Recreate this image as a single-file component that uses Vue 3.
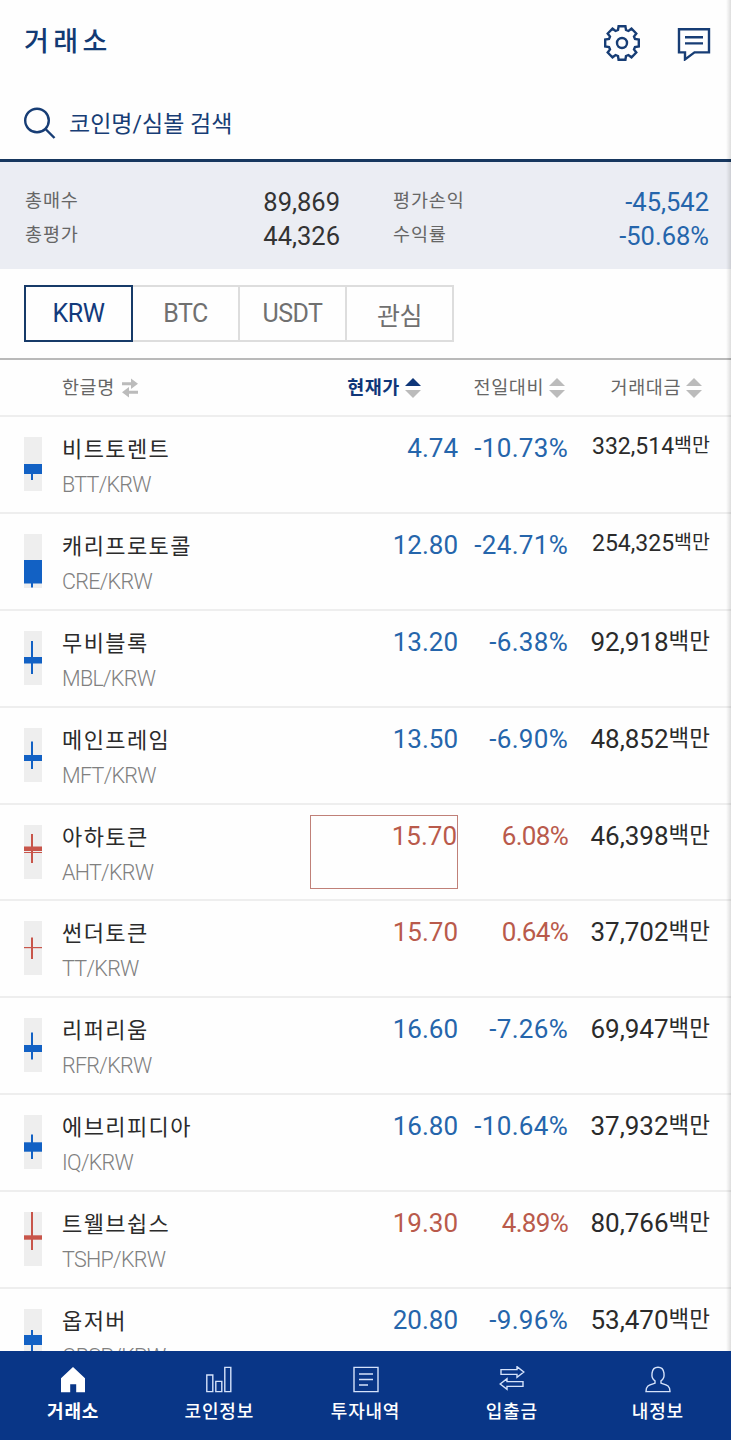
<template>
  <div class="exchange-page">
    <header class="page-header">
      <h1 class="page-title">거래소</h1>
      <div class="header-actions">
        <svg class="header-icon" width="38" height="38" viewBox="-19 -19 38 38">
          <path d="M-3.4-16.8L3.4-16.8 4-13 6.4-12 9.5-14.3 14.3-9.5 12-6.4 13-4 16.8-3.4 16.8 3.4 13 4 12 6.4 14.3 9.5 9.5 14.3 6.4 12 4 13 3.4 16.8-3.4 16.8-4 13-6.4 12-9.5 14.3-14.3 9.5-12 6.4-13 4-16.8 3.4-16.8-3.4-13-4-12-6.4-14.3-9.5-9.5-14.3-6.4-12-4-13Z" />
          <circle cx="0" cy="0" r="5" />
        </svg>
        <svg class="header-icon" width="34" height="36" viewBox="0 0 34 36">
          <path d="M2 4.2H32V27.4H17.5L8 34.4V27.4H2Z" />
          <path d="M8 12.2H26M8 18.4H26" />
        </svg>
      </div>
    </header>

    <div class="search-bar">
      <svg class="search-icon" width="34" height="34" viewBox="0 0 34 34">
        <circle cx="14" cy="14.5" r="11.8" />
        <path d="M22.5 23L31.5 32" />
      </svg>
      <span class="search-text">코인명/심볼 검색</span>
    </div>

    <section class="summary">
      <div v-for="item in summary" :key="item.label" class="summary-item">
        <span class="summary-label">{{ item.label }}</span>
        <span class="summary-value" :class="item.type">{{ item.value }}</span>
      </div>
    </section>

    <div class="market-bar">
      <button
        v-for="market in markets"
        :key="market"
        class="market-tab"
        :class="{ active: market === activeMarket }"
        @click="activeMarket = market"
      >
        {{ market }}
      </button>
    </div>

    <div class="list-header">
      <div class="head-name">
        <span class="head-label">한글명</span>
        <svg width="18" height="20" viewBox="0 0 18 20" class="swap-icon">
          <path d="M1 4.2H10V0.6L17 5.8L10 11V7.2H1ZM17 12.8H8V9L1 14.2L8 19.6V15.8H17Z" />
        </svg>
      </div>
      <div
        v-for="col in columns"
        :key="col.key"
        class="head-cell"
        :class="[col.key, { active: col.key === sortKey }]"
      >
        <span class="head-label">{{ col.label }}</span>
        <svg width="16" height="20" viewBox="0 0 16 20" class="sort-icon">
          <path class="sort-up" d="M8 0L16 8H0Z" />
          <path class="sort-down" d="M0 12H16L8 20Z" />
        </svg>
      </div>
    </div>

    <main class="coin-list">
      <div v-for="coin in coins" :key="coin.symbol" class="coin-row" :class="coin.type">
        <svg class="candle" width="18" height="54" viewBox="0 0 18 54">
          <rect class="candle-bg" width="18" height="54" />
          <rect x="7" width="2" :y="coin.wick[0]" :height="coin.wick[1] - coin.wick[0]" />
          <rect x="0" width="18" :y="coin.body[0]" :height="coin.body[1] - coin.body[0]" />
          <rect v-if="coin.open" x="0" width="18" :y="coin.open" height="1" />
        </svg>
        <div class="coin-info">
          <span class="coin-name">{{ coin.name }}</span>
          <span class="coin-symbol">{{ coin.symbol }}/KRW</span>
        </div>
        <div class="coin-price" :class="{ traded: coin.traded }">{{ coin.price }}</div>
        <div class="coin-rate">{{ coin.rate }}</div>
        <div class="coin-volume" :class="{ small: coin.volume.length > 6 }">
          {{ coin.volume }}<span class="unit">백만</span>
        </div>
      </div>
    </main>

    <nav class="tab-bar">
      <div class="tab-item active">
        <svg width="26" height="27" viewBox="0 0 26 27">
          <path class="filled" d="M13 1L25 12.2V26.3H16.2V18.2H10.2V26.3H1V12.2Z" />
        </svg>
        <span>거래소</span>
      </div>
      <div class="tab-item">
        <svg width="26" height="27" viewBox="0 0 26 27">
          <path d="M0.8 9H6.8V25.6H0.8ZM9.8 15.4H15.8V25.6H9.8ZM18.8 1.4H24.8V25.6H18.8Z" />
        </svg>
        <span>코인정보</span>
      </div>
      <div class="tab-item">
        <svg width="26" height="27" viewBox="0 0 26 27">
          <path d="M1 1.4H25V25.6H1ZM6 8H20M6 13.5H20M6 19H15" />
        </svg>
        <span>투자내역</span>
      </div>
      <div class="tab-item">
        <svg width="26" height="27" viewBox="0 0 26 27">
          <path d="M2 3.6H18V0.6L24.8 6L18 11.4V8.4H2ZM24 15.6H8V12.6L1.2 18L8 23.4V20.4H24Z" />
        </svg>
        <span>입출금</span>
      </div>
      <div class="tab-item">
        <svg width="26" height="27" viewBox="0 0 26 27">
          <path d="M10 14.8C5.5 12.4 5.6 1.3 13 1.3S20.5 12.4 16 14.8V17.2C22 19 25 19.4 25 25.6H1C1 19.4 4 19 10 17.2Z" />
        </svg>
        <span>내정보</span>
      </div>
    </nav>

    <div class="edge-shadow"></div>
  </div>
</template>

<script setup>
import { ref } from 'vue';

const activeMarket = ref('KRW');
const sortKey = ref('price');

const markets = ['KRW', 'BTC', 'USDT', '관심'];

const summary = [
  { label: '총매수', value: '89,869' },
  { label: '평가손익', value: '-45,542', type: 'fall' },
  { label: '총평가', value: '44,326' },
  { label: '수익률', value: '-50.68%', type: 'fall' }
];

const columns = [
  { key: 'price', label: '현재가' },
  { key: 'rate', label: '전일대비' },
  { key: 'volume', label: '거래대금' }
];

// wick, body: 캔들 영역(높이 54) 기준 y 좌표
const coins = [
  { name: '비트토렌트', symbol: 'BTT', price: '4.74', rate: '-10.73%', volume: '332,514', type: 'fall', wick: [27, 43], body: [27, 37] },
  { name: '캐리프로토콜', symbol: 'CRE', price: '12.80', rate: '-24.71%', volume: '254,325', type: 'fall', wick: [26, 53.5], body: [26, 49.5] },
  { name: '무비블록', symbol: 'MBL', price: '13.20', rate: '-6.38%', volume: '92,918', type: 'fall', wick: [10, 43], body: [26, 32.5] },
  { name: '메인프레임', symbol: 'MFT', price: '13.50', rate: '-6.90%', volume: '48,852', type: 'fall', wick: [13.5, 41], body: [27, 33] },
  { name: '아하토큰', symbol: 'AHT', price: '15.70', rate: '6.08%', volume: '46,398', type: 'rise', wick: [9, 38], body: [21.5, 26], open: 27, traded: true },
  { name: '썬더토큰', symbol: 'TT', price: '15.70', rate: '0.64%', volume: '37,702', type: 'rise', wick: [16.5, 38], body: [26, 27.2] },
  { name: '리퍼리움', symbol: 'RFR', price: '16.60', rate: '-7.26%', volume: '69,947', type: 'fall', wick: [14.5, 41.5], body: [27, 34] },
  { name: '에브리피디아', symbol: 'IQ', price: '16.80', rate: '-10.64%', volume: '37,932', type: 'fall', wick: [19.5, 44], body: [27.3, 36.7] },
  { name: '트웰브쉽스', symbol: 'TSHP', price: '19.30', rate: '4.89%', volume: '80,766', type: 'rise', wick: [0, 38], body: [23.3, 27.7] },
  { name: '옵저버', symbol: 'OBSR', price: '20.80', rate: '-9.96%', volume: '53,470', type: 'fall', wick: [21, 45], body: [26, 36] }
];
</script>

<style>
body {
  background-color: #fefefe;
}
</style>

<style scoped>
.exchange-page {
  position: relative;
  width: 731px;
  height: 1440px;
  overflow: hidden;
  display: flex;
  flex-direction: column;
  box-sizing: border-box;
  background-color: #fefefe;
  color: #2b2b2b;
  font-family: Roboto, 'Noto Sans CJK KR', sans-serif;
}

.page-header {
  flex: none;
  height: 86px;
  padding: 0 20px 0 24px;
  box-sizing: border-box;
  display: flex;
  align-items: center;
  justify-content: space-between;
}

.page-title {
  margin: 0;
  padding-bottom: 2px;
  font-size: 27px;
  font-weight: 500;
  letter-spacing: 4.4px;
  line-height: 30px;
  color: #123a74;
}

.header-actions {
  display: flex;
  align-items: center;
  gap: 36px;
}

.header-icon,
.search-icon {
  fill: none;
  stroke: #173d75;
  stroke-width: 2.4;
}

.search-bar {
  flex: none;
  height: 76px;
  padding: 0 23px;
  box-sizing: border-box;
  border-bottom: 3px solid #17375f;
  display: flex;
  align-items: center;
  gap: 12px;
}

.search-text {
  padding-bottom: 2px;
  font-size: 23px;
  color: #173d75;
}

.summary {
  flex: none;
  height: 107px;
  padding: 22px 22px 0 25px;
  box-sizing: border-box;
  display: grid;
  grid-template-columns: 315px 316px;
  column-gap: 53px;
  grid-auto-rows: 34px;
  background-color: #ebedf3;
}

.summary-item {
  display: flex;
  align-items: center;
  justify-content: space-between;
}

.summary-label {
  padding-bottom: 4px;
  font-size: 18.5px;
  letter-spacing: 0.9px;
  color: #666;
}

.summary-value {
  padding-top: 1px;
  font-size: 25.5px;
  color: #333;
}

.summary-value.fall {
  color: #2565ab;
}

.market-bar {
  flex: none;
  height: 91px;
  padding: 16px 24px 17px;
  box-sizing: border-box;
  border-bottom: 2px solid #b9b9b9;
  display: flex;
}

.market-tab {
  width: 109px;
  height: 57px;
  margin-right: -2px;
  padding: 0;
  border: 2px solid #ddd;
  background: none;
  font-family: inherit;
  font-size: 25px;
  letter-spacing: -0.5px;
  color: #707070;
  cursor: pointer;
}

.market-tab.active {
  position: relative;
  z-index: 1;
  border-color: #173a68;
  color: #123a7c;
}

.list-header {
  flex: none;
  height: 57px;
  padding: 0 29px 0 62px;
  box-sizing: border-box;
  border-bottom: 2px solid #eee;
  display: flex;
  align-items: center;
  font-size: 18.5px;
  color: #666;
}

.head-label {
  padding-bottom: 3px;
  letter-spacing: 0.6px;
}

.head-name {
  width: 200px;
  display: flex;
  align-items: center;
  gap: 6px;
}

.swap-icon {
  fill: #bbb;
}

.head-cell {
  display: flex;
  align-items: center;
  justify-content: flex-end;
  gap: 5px;
}

.head-cell.price {
  width: 159px;
}

.head-cell.rate {
  width: 144px;
}

.head-cell.volume {
  width: 137px;
}

.head-cell.active {
  font-weight: 700;
  color: #0f3678;
}

.sort-icon {
  fill: #bbb;
}

.head-cell.active .sort-up {
  fill: #0f3678;
}

.coin-list {
  flex: 1;
  min-height: 0;
  overflow: hidden;
}

.coin-row {
  height: 96.9px;
  padding: 0 21px 0 24px;
  box-sizing: border-box;
  border-bottom: 2px solid #eee;
  display: flex;
  align-items: flex-start;
}

.coin-row.fall {
  --tone: #2565ab;
  --candle: #1261c4;
}

.coin-row.rise {
  --tone: #b95a4b;
  --candle: #c8554a;
}

.candle {
  flex: none;
  margin-top: 20px;
  fill: var(--candle);
}

.candle-bg {
  fill: #eee;
}

.coin-info {
  width: 247px;
  padding: 16px 0 0 20px;
  box-sizing: border-box;
  display: flex;
  flex-direction: column;
}

.coin-name {
  font-size: 22px;
  line-height: 34px;
  letter-spacing: 1.4px;
  white-space: nowrap;
}

.coin-symbol {
  font-size: 21.5px;
  line-height: 35px;
  letter-spacing: -0.7px;
  font-weight: 300;
  color: #808080;
}

.coin-price,
.coin-rate {
  text-align: right;
  font-size: 26px;
  line-height: 40px;
  color: var(--tone);
}

.coin-price {
  width: 148px;
  height: 74px;
  margin: 10px 0 0 21px;
  box-sizing: border-box;
  border: 1px solid transparent;
  border-right-width: 0;
}

/* 방금 체결된 가격 표시 */
.coin-price.traded {
  border-color: #c08078;
  border-right-width: 1px;
}

.coin-rate {
  width: 110px;
  margin-top: 11px;
  letter-spacing: 0.3px;
}

.rise .coin-rate {
  letter-spacing: -0.7px;
}

.coin-volume {
  width: 142px;
  margin-top: 11px;
  text-align: right;
  font-size: 26px;
  line-height: 40px;
  white-space: nowrap;
}

.coin-volume .unit {
  font-size: 22.5px;
  line-height: 1;
  vertical-align: 2px;
}

.coin-volume.small {
  margin-top: 10px;
  font-size: 23px;
}

.coin-volume.small .unit {
  font-size: 19.5px;
}

.tab-bar {
  flex: none;
  height: 89px;
  padding-top: 15px;
  box-sizing: border-box;
  display: flex;
  background-color: #093687;
  color: #fff;
}

.tab-item {
  flex: 1;
  display: flex;
  flex-direction: column;
  align-items: center;
  gap: 6px;
  font-size: 18px;
  line-height: 26px;
  letter-spacing: 0.8px;
  font-weight: 500;
}

.tab-item svg {
  fill: none;
  stroke: #d5e2fa;
  stroke-width: 1.4;
}

.tab-item .filled {
  fill: #fff;
  stroke: none;
}

.tab-item.active {
  font-weight: 700;
}

.edge-shadow {
  position: absolute;
  top: 0;
  right: 0;
  width: 5px;
  height: 1351px;
  background: linear-gradient(to right, rgba(0, 0, 0, 0), rgba(0, 0, 0, 0.13));
}
</style>
